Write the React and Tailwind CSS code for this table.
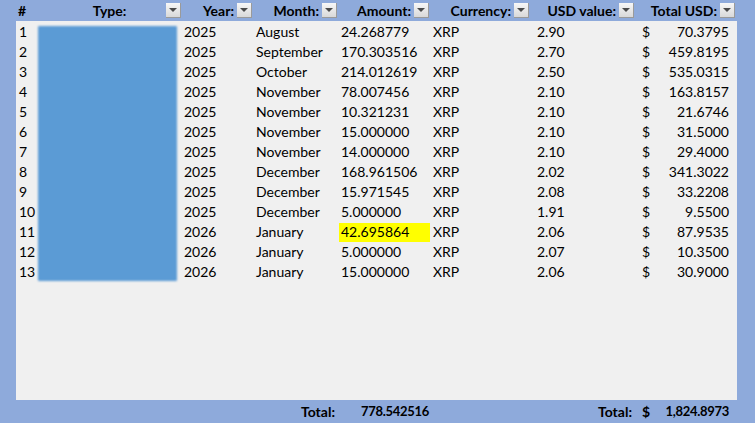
const rows = [
  ["1", "2025", "August", "24.268779", "2.90", "70.3795"],
  ["2", "2025", "September", "170.303516", "2.70", "459.8195"],
  ["3", "2025", "October", "214.012619", "2.50", "535.0315"],
  ["4", "2025", "November", "78.007456", "2.10", "163.8157"],
  ["5", "2025", "November", "10.321231", "2.10", "21.6746"],
  ["6", "2025", "November", "15.000000", "2.10", "31.5000"],
  ["7", "2025", "November", "14.000000", "2.10", "29.4000"],
  ["8", "2025", "December", "168.961506", "2.02", "341.3022"],
  ["9", "2025", "December", "15.971545", "2.08", "33.2208"],
  ["10", "2025", "December", "5.000000", "1.91", "9.5500"],
  ["11", "2026", "January", "42.695864", "2.06", "87.9535"],
  ["12", "2026", "January", "5.000000", "2.07", "10.3500"],
  ["13", "2026", "January", "15.000000", "2.06", "30.9000"],
];

const cols = "grid grid-cols-[20px_147px_71px_85px_92px_100px_105px_101px]";

function FilterButton() {
  return (
    <span className="ml-[3px] flex h-[15px] w-[15px] shrink-0 justify-center border-r border-b border-[#9a9a9a] bg-gradient-to-b from-[#f7f7f7] to-[#d9d9d9] pt-[5px]">
      <span className="h-0 w-0 border-x-[4px] border-t-[4px] border-x-transparent border-t-[#4a4a4a]" />
    </span>
  );
}

function Head({ label, center }) {
  return (
    <div className="relative flex h-[21px] items-center justify-end pr-[2px]">
      {center ? (
        <span className="absolute inset-x-0 text-center">{label}</span>
      ) : (
        <span>{label}</span>
      )}
      <FilterButton />
    </div>
  );
}

export default function App() {
  return (
    <div
      className="flex h-[423px] w-[755px] flex-col bg-[#8eaadb] text-[14px] leading-none text-black"
      style={{ fontFamily: "Lato, 'Liberation Sans', sans-serif" }}
    >
      {/* header */}
      <div className={`${cols} pl-[16px] font-bold`}>
        <div className="flex h-[21px] items-center pl-[2px]">#</div>
        <Head label="Type:" center />
        <Head label="Year:" />
        <Head label="Month:" />
        <Head label="Amount:" />
        <Head label="Currency:" />
        <Head label="USD value:" />
        <Head label="Total USD:" />
      </div>

      {/* body */}
      <div className="relative ml-[16px] mr-[18px] flex-1 bg-[#f0f0f0] pt-[1px]">
        {rows.map((r) => (
          <div key={r[0]} className={`${cols} h-[20px] items-center`}>
            <div className="pl-[3px]">{r[0]}</div>
            <div />
            <div className="pl-[1px]">{r[1]}</div>
            <div className="pl-[2px]">{r[2]}</div>
            <div
              className={`flex h-[19px] items-center pl-[2px] ${
                r[0] === "11" ? "mr-[1px] bg-[#ffff00]" : ""
              }`}
            >
              {r[3]}
            </div>
            <div className="pl-[2px]">XRP</div>
            <div className="pl-[6px]">{r[4]}</div>
            <div className="flex justify-between pl-[6px] pr-[8px]">
              <span>$</span>
              <span>{r[5]}</span>
            </div>
          </div>
        ))}
        {/* redacted Type column */}
        <div className="absolute left-[22px] top-[5px] h-[255px] w-[139px] rounded-[1px] bg-[#5b9bd5] blur-[1px]" />
      </div>

      {/* totals */}
      <div className={`${cols} h-[23px] items-center pl-[16px] font-bold`}>
        <div />
        <div />
        <div />
        <div className="pr-[4px] text-right">Total:</div>
        <div className="pr-[2px] text-right text-[13px] tracking-[-0.3px]">778.542516</div>
        <div />
        <div className="pr-[4px] text-right">Total:</div>
        <div className="flex items-center justify-between pl-[6px] pr-[8px]">
          <span>$</span>
          <span className="text-[13px] tracking-[-0.3px]">1,824.8973</span>
        </div>
      </div>
    </div>
  );
}
